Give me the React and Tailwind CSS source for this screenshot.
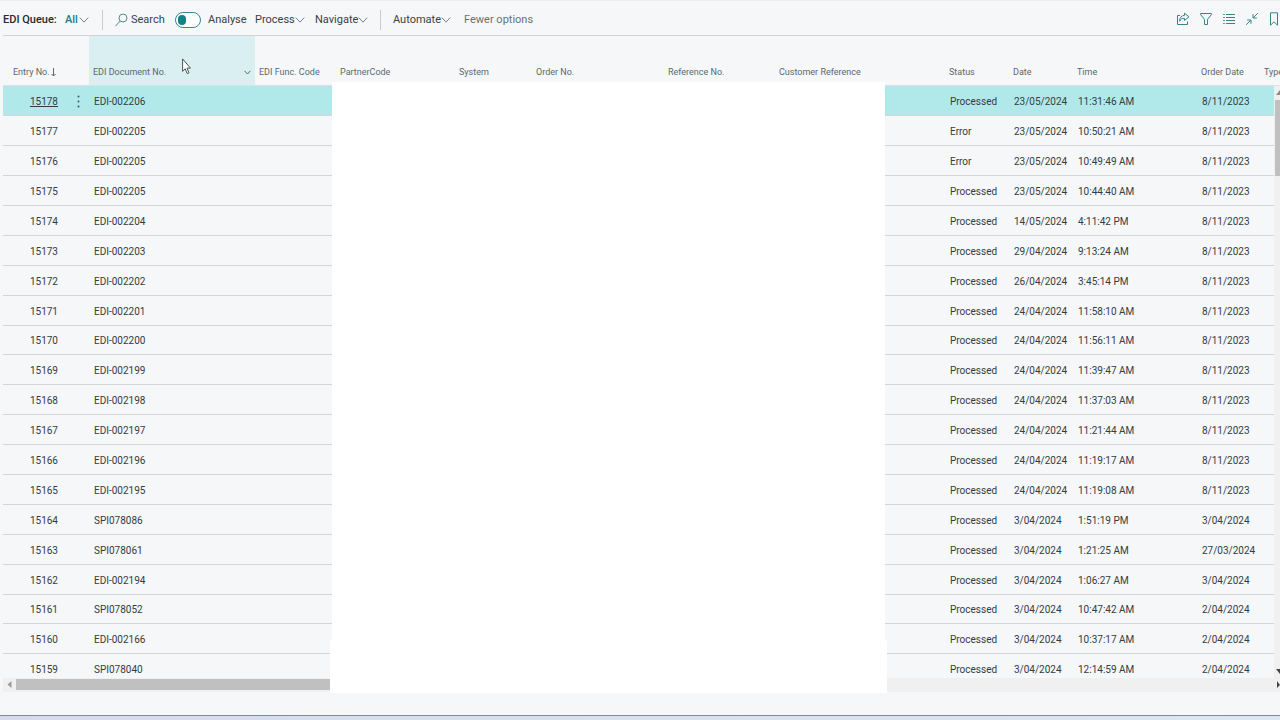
import React, { useState } from "react";
import { clsx } from "clsx";

const columns = [
  { label: "Entry No.", width: "w-[86px]", sorted: true },
  { label: "EDI Document No.", width: "w-[166px]", active: true },
  { label: "EDI Func. Code", width: "w-[81px]" },
  { label: "PartnerCode", width: "w-[119px]" },
  { label: "System", width: "w-[77px]" },
  { label: "Order No.", width: "w-[132px]" },
  { label: "Reference No.", width: "w-[111px]" },
  { label: "Customer Reference", width: "w-[170px]" },
  { label: "Status", width: "w-[64px]" },
  { label: "Date", width: "w-[64px]" },
  { label: "Time", width: "w-[124px]" },
  { label: "Order Date", width: "w-[63px]" },
  { label: "Type", width: "w-auto" },
];

const entries = [
  ["15178", "EDI-002206", "Processed", "23/05/2024", "11:31:46 AM", "8/11/2023"],
  ["15177", "EDI-002205", "Error", "23/05/2024", "10:50:21 AM", "8/11/2023"],
  ["15176", "EDI-002205", "Error", "23/05/2024", "10:49:49 AM", "8/11/2023"],
  ["15175", "EDI-002205", "Processed", "23/05/2024", "10:44:40 AM", "8/11/2023"],
  ["15174", "EDI-002204", "Processed", "14/05/2024", "4:11:42 PM", "8/11/2023"],
  ["15173", "EDI-002203", "Processed", "29/04/2024", "9:13:24 AM", "8/11/2023"],
  ["15172", "EDI-002202", "Processed", "26/04/2024", "3:45:14 PM", "8/11/2023"],
  ["15171", "EDI-002201", "Processed", "24/04/2024", "11:58:10 AM", "8/11/2023"],
  ["15170", "EDI-002200", "Processed", "24/04/2024", "11:56:11 AM", "8/11/2023"],
  ["15169", "EDI-002199", "Processed", "24/04/2024", "11:39:47 AM", "8/11/2023"],
  ["15168", "EDI-002198", "Processed", "24/04/2024", "11:37:03 AM", "8/11/2023"],
  ["15167", "EDI-002197", "Processed", "24/04/2024", "11:21:44 AM", "8/11/2023"],
  ["15166", "EDI-002196", "Processed", "24/04/2024", "11:19:17 AM", "8/11/2023"],
  ["15165", "EDI-002195", "Processed", "24/04/2024", "11:19:08 AM", "8/11/2023"],
  ["15164", "SPI078086", "Processed", "3/04/2024", "1:51:19 PM", "3/04/2024"],
  ["15163", "SPI078061", "Processed", "3/04/2024", "1:21:25 AM", "27/03/2024"],
  ["15162", "EDI-002194", "Processed", "3/04/2024", "1:06:27 AM", "3/04/2024"],
  ["15161", "SPI078052", "Processed", "3/04/2024", "10:47:42 AM", "2/04/2024"],
  ["15160", "EDI-002166", "Processed", "3/04/2024", "10:37:17 AM", "2/04/2024"],
  ["15159", "SPI078040", "Processed", "3/04/2024", "12:14:59 AM", "2/04/2024"],
];

const Icon = ({ className, children }) => (
  <svg
    className={clsx("shrink-0", className)}
    width="14"
    height="14"
    viewBox="0 0 14 14"
    fill="none"
    stroke="currentColor"
    aria-hidden="true"
  >
    {children}
  </svg>
);

const Chevron = () => (
  <svg
    className="shrink-0 text-[#7b8285]"
    width="10"
    height="6"
    viewBox="0 0 10 6"
    fill="none"
    stroke="currentColor"
    aria-hidden="true"
  >
    <path d="M.8.6 5 5.2 9.2.6" />
  </svg>
);

const MenuButton = ({ label, className }) => (
  <button type="button" className={clsx("flex items-center justify-between", className)}>
    {label}
    <Chevron />
  </button>
);

const Divider = ({ className }) => (
  <div className={clsx("h-5 w-px shrink-0 bg-[#c9cccf]", className)} />
);

const Toolbar = () => {
  const [analyse, setAnalyse] = useState(false);

  return (
    <header className="flex h-[35px] shrink-0 items-center justify-between overflow-hidden border-t border-[#eceeef] pl-[3px] text-[11px] leading-4 whitespace-nowrap text-[#3a4245]">
      <div className="flex items-center pt-1">
        <h1 className="w-[62px] font-medium text-[#252c2e]">EDI Queue:</h1>
        <MenuButton label="All" className="w-6 font-medium text-[#1c7f82]" />
        <Divider className="mr-3 ml-[13px]" />
        <button type="button" className="flex w-[46px] items-center justify-between">
          <Icon className="text-[#4f8f92]">
            <circle cx="8" cy="5" r="4" />
            <path d="M5.2 8 .4 13.2" />
          </Icon>
          <span className="w-[30px]">Search</span>
        </button>
        <label className="ml-[14px] flex w-[68px] items-center justify-between">
          <span className="relative flex">
            <input
              type="checkbox"
              role="switch"
              checked={analyse}
              onChange={() => setAnalyse(!analyse)}
              className="peer h-4 w-[26px] appearance-none rounded-full border border-[#2f8a8d] bg-white"
            />
            <span className="pointer-events-none absolute top-[3px] left-[3px] h-[10px] w-2 rounded-full bg-[#0f8387] peer-checked:left-[15px]" />
          </span>
          <span className="w-[35px]">Analyse</span>
        </label>
        <MenuButton label="Process" className="ml-3 w-[46px]" />
        <MenuButton label="Navigate" className="ml-[14px] w-[53px]" />
        <Divider className="mx-3" />
        <MenuButton label="Automate" className="w-[58px]" />
        <button type="button" className="ml-[13px] text-[#6a7174]">
          Fewer options
        </button>
      </div>

      <div className="-mr-0.5 flex items-center gap-[9px] pt-0.5 text-[#35868a]">
        <button type="button" aria-label="Share">
          <Icon>
            <path d="M4 3.5H1.5v9h10V9.5" />
            <path d="M8.5 1.2 13 4.8 8.5 8.4V6.4C6 6.2 4.7 7.2 3.6 9.2 3.7 5.8 5.3 3.6 8.5 3.3z" />
          </Icon>
        </button>
        <button type="button" aria-label="Filter">
          <Icon>
            <path d="M1.5 1.5h11v1L8.5 7.4v5.1h-3V7.4l-4-4.9z" />
          </Icon>
        </button>
        <button type="button" aria-label="List view">
          <Icon>
            <path d="M4 2.5h9M4 5.5h9M4 8.5h9M4 11.5h9M1.2 2.5h1.6M1.2 5.5h1.6M1.2 8.5h1.6M1.2 11.5h1.6" />
          </Icon>
        </button>
        <button type="button" aria-label="Collapse">
          <Icon>
            <path d="M12.8 1.2 8.2 5.8M8 2.2V6h3.8M1.2 12.8l4.6-4.6M2.2 8H6v3.8" />
          </Icon>
        </button>
        <button type="button" aria-label="Bookmark">
          <Icon>
            <path d="M2.5.8h7v12.4L6 9.8l-3.5 3.4z" />
          </Icon>
        </button>
      </div>
    </header>
  );
};

const HeaderCell = ({ column }) => (
  <th
    scope="col"
    className={clsx(
      "h-[50px] px-1 pb-[5px] text-left align-bottom text-[9px] leading-4 font-normal text-[#5e676a]",
      column.width,
      column.active && "bg-[#d9eff1]"
    )}
  >
    {column.active ? (
      <button type="button" className="flex w-full items-center justify-between">
        {column.label}
        <svg width="7" height="5" viewBox="0 0 7 5" fill="none" stroke="currentColor" aria-hidden="true">
          <path d="M.6.8 3.5 4 6.4.8" />
        </svg>
      </button>
    ) : column.sorted ? (
      <button type="button" className="flex items-center gap-px pl-1.5">
        {column.label}
        <svg width="5" height="9" viewBox="0 0 5 9" fill="none" stroke="currentColor" aria-hidden="true">
          <path d="M2.5 0v8M.5 6l2 2 2-2" />
        </svg>
      </button>
    ) : (
      column.label
    )}
  </th>
);

const EntryRow = ({ entry, selected }) => {
  const [no, documentNo, status, date, time, orderDate] = entry;

  return (
    <tr
      className={clsx(
        "h-[30px] border-b border-[#d3d6d9] nth-[9n]:h-[29px]",
        selected && "bg-[#b1e9eb]"
      )}
    >
      <td className="pt-0.5">
        <div className="flex items-center">
          <a href="#entry" className={clsx("w-[55px] text-right", selected && "underline")}>
            {no}
          </a>
          {selected && (
            <button type="button" aria-label="More options" className="ml-[19px]">
              <svg width="3" height="13" viewBox="0 0 3 13" fill="#3f5a5c">
                <circle cx="1.5" cy="1.5" r="1" />
                <circle cx="1.5" cy="6.5" r="1" />
                <circle cx="1.5" cy="11.5" r="1" />
              </svg>
            </button>
          )}
        </div>
      </td>
      <td className="px-[5px] pt-0.5">{documentNo}</td>
      <td />
      <td />
      <td />
      <td />
      <td />
      <td />
      <td className="px-[5px] pt-0.5">{status}</td>
      <td className="px-[5px] pt-0.5">{date}</td>
      <td className="px-[5px] pt-0.5">{time}</td>
      <td className="px-[5px] pt-0.5">{orderDate}</td>
      <td />
    </tr>
  );
};

const App = () => {
  return (
    <div className="flex h-screen flex-col overflow-hidden bg-[#f5f7f9] font-[Roboto,sans-serif]">
      <Toolbar />

      <main className="relative flex min-h-0 flex-1 flex-col">
        <div className="min-h-0 flex-1 overflow-hidden pl-[3px]">
          <table className="w-full table-fixed border-collapse border-t border-[#cfd3d6] text-[10px] leading-4 whitespace-nowrap text-[#343c3f]">
            <thead>
              <tr className="border-b border-[#dde1e3]">
                {columns.map((column) => (
                  <HeaderCell key={column.label} column={column} />
                ))}
              </tr>
            </thead>
            <tbody>
              {entries.map((entry, index) => (
                <EntryRow key={entry[0]} entry={entry} selected={index === 0} />
              ))}
            </tbody>
          </table>
        </div>

        {/* horizontal scrollbar */}
        <div className="ml-[3px] flex h-[14px] shrink-0 items-center justify-between bg-[#f0f0f0] pb-px">
          <div className="flex items-center">
            <svg className="mx-1" width="5" height="7" viewBox="0 0 5 7" fill="#9a9a9a">
              <path d="M4.5 0v7L.5 3.5z" />
            </svg>
            <div className="h-[11px] w-[370px] bg-[#c0c0c0]" />
          </div>
          <svg width="3" height="7" viewBox="0 0 3 7" fill="#444">
            <path d="M0 0v7l3-3z" />
          </svg>
        </div>

        {/* vertical scrollbar */}
        <div className="absolute top-[51px] right-0 bottom-[14px] flex w-1.5 flex-col items-end justify-between bg-[#f0f0f0]">
          <div className="flex flex-col items-end">
            <svg className="my-1" width="4" height="6" viewBox="0 0 4 6" fill="#8a8a8a">
              <path d="M4 0v5H0z" />
            </svg>
            <div className="h-[76px] w-[5px] bg-[#c0c0c0]" />
          </div>
          <svg className="mb-1" width="4" height="5" viewBox="0 0 4 5" fill="#444">
            <path d="M0 0h4v5z" />
          </svg>
        </div>

        {/* blanked out customer columns */}
        <div className="absolute top-[47px] -bottom-px left-[330px] flex w-[557px] flex-col">
          <div className="mx-[2px] flex-1 bg-white" />
          <div className="h-[53px] bg-white" />
        </div>

        <svg className="absolute top-[23px] left-[182px]" width="9" height="17" viewBox="0 0 9 17" fill="#fff" stroke="#4b5557">
          <path d="M.6.9v12.4l2.6-2.5 2 4.8 1.8-.8-2-4.7h3.5z" />
        </svg>
      </main>

      <footer className="flex h-7 shrink-0 flex-col justify-end">
        <div className="h-[5px] border-t border-[#858b92] bg-linear-to-r from-[#d5daec] to-[#dbe7f2]" />
      </footer>
    </div>
  );
};

export default App;
